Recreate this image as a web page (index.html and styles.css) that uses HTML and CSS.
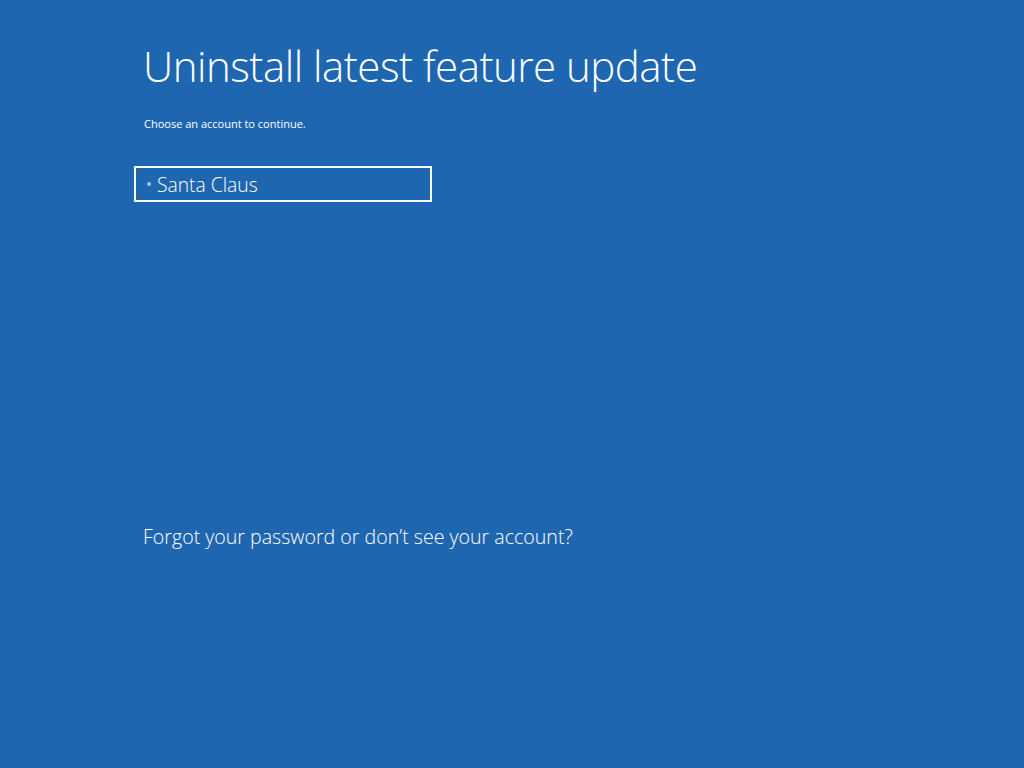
FILE: index.html
```html
<!DOCTYPE html>
<html lang="en">

<head>
    <meta charset="UTF-8">
    <title>Uninstall latest feature update</title>
    <link rel="stylesheet" href="styles.css">
</head>

<body>
    <div class="page">
        <h1 class="title">Uninstall latest feature update</h1>
        <p class="hint">Choose an account to continue.</p>
        <div class="accounts">
            <div class="account selected">
                <span class="dot"></span>
                <span class="name">Santa Claus</span>
            </div>
        </div>
        <a class="forgot" href="#">Forgot your password or don’t see your account?</a>
    </div>
</body>

</html>
```

FILE: styles.css
```css
* {
    margin: 0;
    padding: 0;
    box-sizing: border-box;
    font-family: "Open Sans", "Noto Sans", sans-serif;
}

body {
    width: 100%;
    height: 100vh;
    background-color: #1f66b1;
    color: #fff;
}

.page {
    display: flex;
    flex-direction: column;
    align-items: flex-start;
    padding: 36px 0 0 143px;
}

.title {
    font-size: 42px;
    font-weight: 300;
    line-height: 60px;
    letter-spacing: -0.5px;
}

.hint {
    font-size: 11px;
    margin-top: 20px;
    margin-left: 1px;
}

.accounts {
    margin-top: 35px;
    margin-left: -9px;
}

.account {
    width: 298px;
    height: 36px;
    border: 2px solid #fff;
    display: flex;
    align-items: center;
    gap: 6px;
    padding-left: 11px;
}

.dot {
    width: 4px;
    height: 4px;
    border-radius: 50%;
    background-color: #8fd0ff;
}

.name {
    font-size: 19.3px;
    font-weight: 300;
}

.forgot {
    margin-top: 321px;
    color: #fff;
    text-decoration: none;
    font-size: 19.6px;
    font-weight: 300;
}
```
